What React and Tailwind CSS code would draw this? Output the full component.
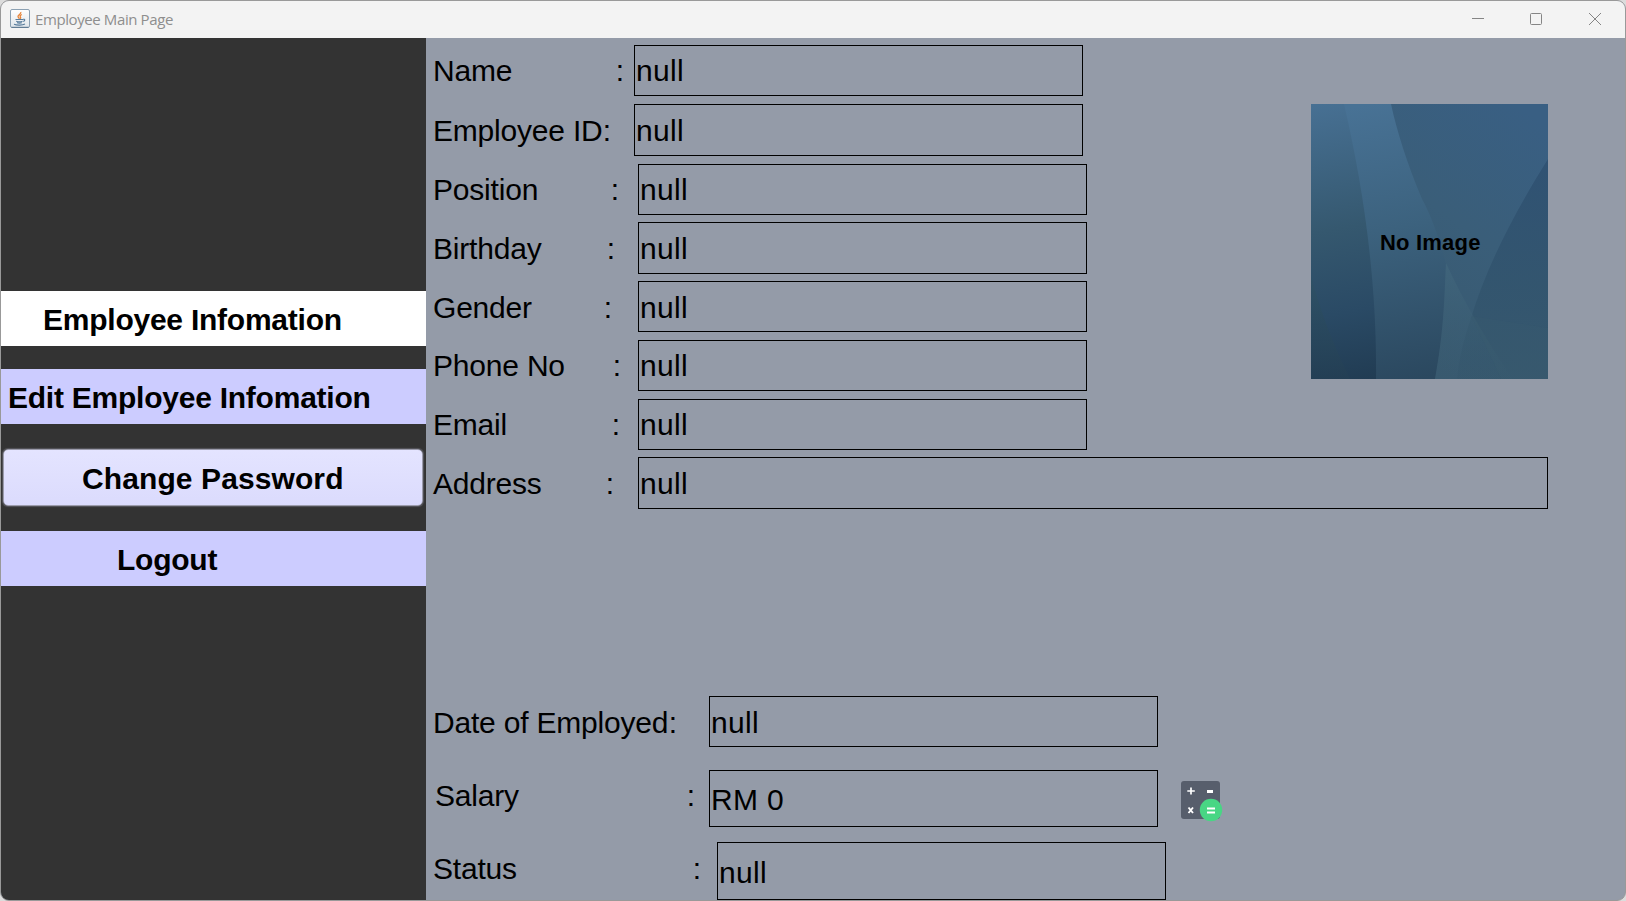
const topRows = [
  { label: "Name", row: "h-[51px]", lab: "w-[191px] pt-[9px]", box: "ml-[10px] pt-[8px]", value: "null" },
  { label: "Employee ID", row: "mt-[8px] h-[52px]", lab: "w-[178px] pt-[10px]", box: "ml-[23px] pt-[9px]", value: "null" },
  { label: "Position", row: "mt-[8px] h-[51px]", lab: "w-[186px] pt-[9px]", box: "ml-[19px] pt-[8px]", value: "null" },
  { label: "Birthday", row: "mt-[7px] h-[52px]", lab: "w-[182px] pt-[10px]", box: "ml-[23px] pt-[9px]", value: "null" },
  { label: "Gender", row: "mt-[7px] h-[51px]", lab: "w-[179px] pt-[10px]", box: "ml-[26px] pt-[9px]", value: "null" },
  { label: "Phone No", row: "mt-[8px] h-[51px]", lab: "w-[188px] pt-[9px]", box: "ml-[17px] pt-[8px]", value: "null" },
  { label: "Email", row: "mt-[8px] h-[51px]", lab: "w-[187px] pt-[9px]", box: "ml-[18px] pt-[8px]", value: "null" },
];

function Field({ label, row, lab, box, value, width = "w-[449px]", children }) {
  return (
    <div className={`flex shrink-0 items-start pl-[7px] text-[30px] leading-[33px] ${row}`}>
      <div className={`flex shrink-0 justify-between whitespace-nowrap ${lab}`}>
        <span className="tracking-[-0.2px]">{label}</span>
        <span>:</span>
      </div>
      <div className={`h-full shrink-0 border border-black pl-[1px] tracking-[0.3px] ${width} ${box}`}>{value}</div>
      {children}
    </div>
  );
}

function JavaIcon() {
  return (
    <svg width="20" height="19" viewBox="0 0 20 19" fill="none">
      <defs>
        <linearGradient id="cup" x1="0" y1="0" x2="0" y2="1">
          <stop offset="0" stopColor="#ffffff" />
          <stop offset="1" stopColor="#dfe5ea" />
        </linearGradient>
      </defs>
      <rect x="0.5" y="0.5" width="19" height="18" rx="1.5" fill="url(#cup)" stroke="#8ba0b2" />
      <path d="M1.5 18.3h17" stroke="#57748c" />
      <path d="M10.8 3c.8 2-3.3 2.7-2.8 4.700.2.8 1 1.200 1.400 2M11.800 5.500c-1.500.8-2.200 1.500-1.300 2.700.5.700.2 1.200-.300 1.700" stroke="#e8853a" strokeWidth="1.300" />
      <path d="M5.500 10.500h7.500M6.200 12.200c2 .7 4.700.6 6.300 0M7 13.700c1.500.5 3.300.5 4.800 0M13 10.300c2.300-.6 2.300 1.500.200 2.200M4 15.300c3 1.200 8.500 1 11-.200" stroke="#587c9c" strokeWidth="1.100" />
    </svg>
  );
}

function CalculatorIcon() {
  return (
    <svg width="42" height="41" viewBox="0 0 42 41" className="ml-[23px] mt-[11px] shrink-0">
      <rect x="0" y="0" width="39" height="38" rx="3" fill="#575e6c" />
      <path d="M10 6.500v7M6.300 10h7.500" stroke="#fff" strokeWidth="1.700" />
      <path d="M26 10.500h6" stroke="#fff" strokeWidth="3" />
      <path d="M7.500 26.500l4.500 5.500M12 26.500l-4.500 5.500" stroke="#fff" strokeWidth="1.900" />
      <circle cx="30" cy="29" r="11.200" fill="#48d684" />
      <path d="M26 27.500h8M26 31.500h8" stroke="#fff" strokeWidth="2" />
    </svg>
  );
}

function Photo() {
  return (
    <div className="relative mt-[59px] ml-[224px] h-[275px] w-[237px] shrink-0 overflow-hidden">
      <svg width="237" height="275" viewBox="0 0 237 275">
        <defs>
          <linearGradient id="base" gradientUnits="userSpaceOnUse" x1="60" y1="0" x2="110" y2="275">
            <stop offset="0" stopColor="#487295" />
            <stop offset="0.450" stopColor="#3c627e" />
            <stop offset="1" stopColor="#2b485f" />
          </linearGradient>
          <linearGradient id="left" gradientUnits="userSpaceOnUse" x1="10" y1="0" x2="60" y2="275">
            <stop offset="0" stopColor="#477093" />
            <stop offset="0.450" stopColor="#35586f" />
            <stop offset="0.750" stopColor="#2a4a65" />
            <stop offset="1" stopColor="#213c53" />
          </linearGradient>
          <linearGradient id="right" x1="0.800" y1="0" x2="0.400" y2="1">
            <stop offset="0" stopColor="#395f83" />
            <stop offset="0.500" stopColor="#3a5e79" />
            <stop offset="1" stopColor="#38596f" />
          </linearGradient>
          <linearGradient id="corner" x1="0" y1="0" x2="0" y2="1">
            <stop offset="0" stopColor="#2e5071" />
            <stop offset="0.600" stopColor="#32546d" />
            <stop offset="1" stopColor="#36576d" />
          </linearGradient>
          <linearGradient id="low" x1="0" y1="0" x2="0" y2="1">
            <stop offset="0" stopColor="#2f5265" />
            <stop offset="1" stopColor="#243f54" />
          </linearGradient>
          <linearGradient id="ray" x1="0" y1="0" x2="0" y2="1">
            <stop offset="0" stopColor="#42677d" stopOpacity="0.700" />
            <stop offset="1" stopColor="#3a5c70" stopOpacity="0.100" />
          </linearGradient>
        </defs>
        <rect width="237" height="275" fill="url(#base)" />
        <path d="M0 0H33C52 82 66 175 65 275H0Z" fill="url(#left)" />
        <path d="M0 172C10 210 24 244 39 275H0Z" fill="url(#low)" opacity="0.700" />
        <path d="M80 0H237V275H124C133 226 134 190 135 160C128 133 119 109 111 95C96 59 86 28 80 0Z" fill="url(#right)" />
        <path d="M237 55C202 111 175 164 160 214C152 238 148 255 146 275H237Z" fill="url(#corner)" opacity="0.850" />
        <path d="M135 159C133 200 132 234 124 275H202C176 238 153 198 135 159Z" fill="url(#ray)" />
        <path d="M160 212L237 224V275H190C180 253 170 232 160 212Z" fill="#3b5c6d" opacity="0.180" />
      </svg>
      <div className="absolute left-[69px] top-[126px] whitespace-nowrap text-[22px] font-bold leading-[25px] tracking-[0.200px]">No Image</div>
    </div>
  );
}

export default function App() {
  return (
    <div className="h-[901px] w-[1626px] overflow-hidden bg-[#dcdcdc] font-['Liberation_Sans',Arial,sans-serif] text-black">
      <div className="flex h-full w-full flex-col overflow-hidden rounded-[9px] border border-[#999999] bg-[#949ba8]">
        <header className="flex h-[37px] shrink-0 items-start bg-[#f3f3f3] pl-[9px]">
          <div className="mt-[8px]"><JavaIcon /></div>
          <span className="ml-[5px] mt-[8px] whitespace-nowrap font-['Open_Sans','Noto_Sans',sans-serif] text-[15px] leading-[20px] tracking-[-0.400px] text-[#8e8e8e]">Employee Main Page</span>
          <svg width="130" height="13" viewBox="0 0 130 13" className="ml-auto mr-[24px] mt-[11px]" fill="none" stroke="#858585">
            <path d="M1 6.500h12" />
            <rect x="59.500" y="1.500" width="11" height="11" rx="1" />
            <path d="M118 1l12 12M130 1l-12 12" />
          </svg>
        </header>
        <div className="flex min-h-0 flex-1">
          <nav className="flex w-[425px] shrink-0 flex-col bg-[#333333] pt-[253px] text-[30px] font-bold leading-[33px] tracking-[-0.24px]">
            <button className="h-[55px] shrink-0 whitespace-nowrap bg-white pl-[42px] pt-[1px] text-left">Employee Infomation</button>
            <button className="mt-[23px] h-[55px] shrink-0 whitespace-nowrap bg-[#ccccff] pl-[7px] pt-[1px] text-left">Edit Employee Infomation</button>
            <button className="ml-[2px] mt-[25px] h-[57px] w-[420px] shrink-0 whitespace-nowrap rounded-[5px] border-[1px] border-[#9c9cac] bg-linear-to-b from-[#e4e4ff] to-[#dbdbfd] pl-[78px] pt-[1px] text-left tracking-[0.1px] shadow-[0_0_1px_1px_rgba(150,150,165,0.35)]">Change Password</button>
            <button className="mt-[25px] h-[55px] shrink-0 whitespace-nowrap bg-[#ccccff] pl-[116px] pt-[1px] text-left">Logout</button>
          </nav>
          <main className="flex min-w-0 flex-1 flex-col pt-[7px]">
            <div className="flex h-[412px] shrink-0 items-start">
              <div className="flex w-[661px] shrink-0 flex-col">
                {topRows.map((r) => <Field key={r.label} {...r} />)}
              </div>
              <Photo />
            </div>
            <Field label="Address" row="h-[52px]" lab="w-[181px] pt-[10px]" box="ml-[24px] pt-[9px]" width="w-[910px]" value="null" />
            <Field label="Date of Employed" row="mt-[187px] h-[51px]" lab="w-[244px] pt-[10px]" box="ml-[32px] pt-[9px]" value="null" />
            <Field label="Salary" row="mt-[23px] h-[57px]" lab="ml-[2px] w-[260px] pt-[9px]" box="ml-[14px] pt-[12px]" value="RM 0">
              <CalculatorIcon />
            </Field>
            <Field label="Status" row="mt-[15px] h-[58px]" lab="w-[268px] pt-[10px]" box="ml-[16px] pt-[13px]" value="null" />
          </main>
        </div>
      </div>
    </div>
  );
}
